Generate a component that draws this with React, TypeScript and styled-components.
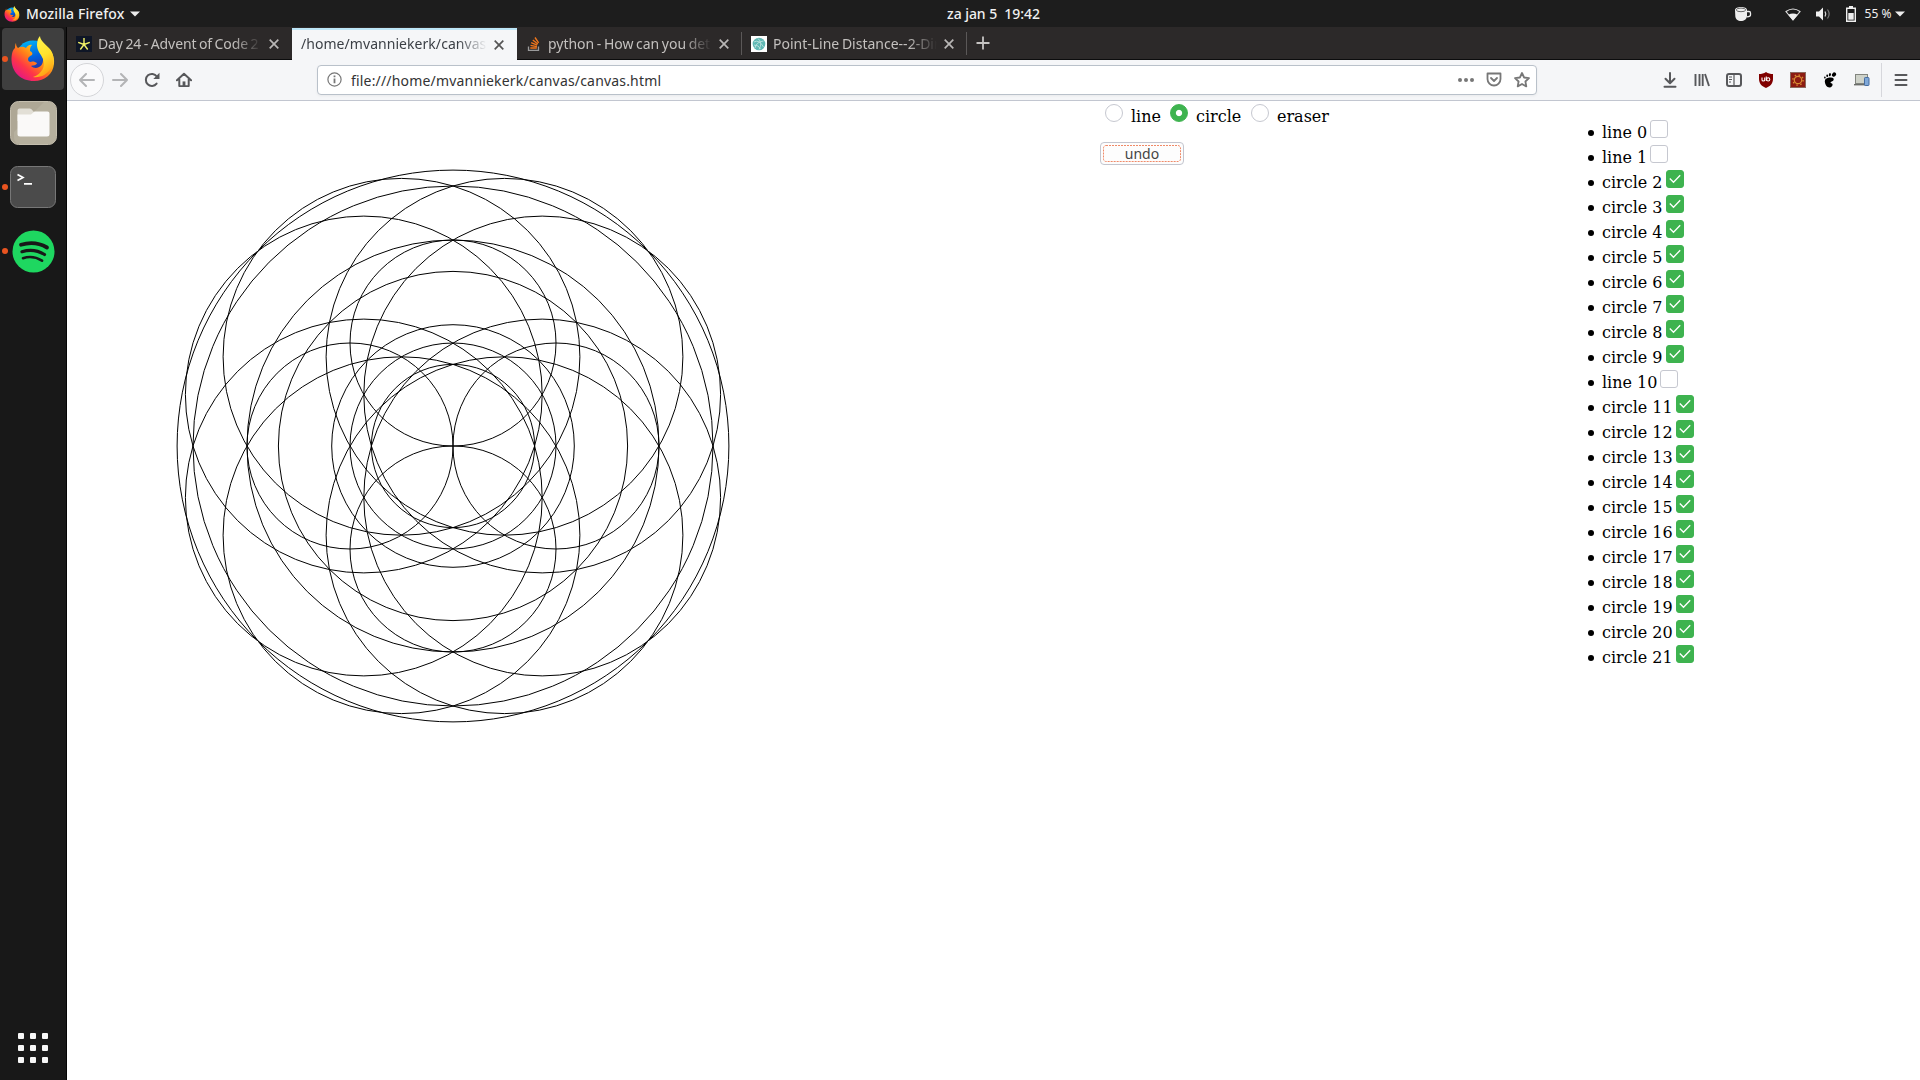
import React from 'react';
import styled, { createGlobalStyle } from 'styled-components';

const Global = createGlobalStyle`
  * { box-sizing: border-box; }
  body { margin: 0; background: #fff; overflow: hidden; }
  svg { display: block; flex: none; }
`;

const UI_FONT = '"Noto Sans", "Open Sans", sans-serif';

const Desktop = styled.div`
  width: 1920px;
  height: 1080px;
  display: flex;
  flex-direction: column;
  font-family: ${UI_FONT};
`;

const TopBar = styled.header`
  height: 27px;
  flex: none;
  display: grid;
  grid-template-columns: 943px 104px 1fr;
  align-items: center;
  padding: 0 12px 1px 4px;
  background: #1d1d1d;
  color: #f0f0f0;
  font-size: 14px;
  line-height: 26px;
  white-space: pre;
`;

const AppMenu = styled.div`
  display: flex;
  align-items: center;
  gap: 6px;
  padding-top: 1px;
`;

const UiText = styled.span<{ $spacing?: number; $size?: number; $weight?: number }>`
  font-size: ${(p) => p.$size ?? 14}px;
  font-weight: ${(p) => p.$weight ?? 400};
  letter-spacing: ${(p) => p.$spacing ?? 0}px;
  white-space: pre;
`;

const Clock = styled.div`
  white-space: pre;
`;

const Indicators = styled.div`
  display: flex;
  align-items: center;
  justify-content: flex-end;
  padding-top: 1px;
`;

const Slot = styled.div<{ $w: number }>`
  width: ${(p) => p.$w}px;
  flex: none;
  display: flex;
  align-items: center;
  justify-content: center;
`;

const Workspace = styled.div`
  flex: 1;
  display: flex;
  min-height: 0;
`;

const Dock = styled.aside`
  width: 67px;
  flex: none;
  display: flex;
  flex-direction: column;
  padding-top: 1px;
  gap: 2px;
  background: #181818;
  border-right: 1px solid #050505;
`;

const DockItem = styled.div<{ $active?: boolean }>`
  height: 62px;
  width: 62px;
  margin-left: 2px;
  display: flex;
  align-items: center;
  border-radius: 4px;
  background: ${(p) => (p.$active ? '#3f3f3f' : 'transparent')};
`;

const DockIcon = styled.div`
  flex: 1;
  display: flex;
  justify-content: center;
  padding-right: 6px;
`;

const Pip = styled.i<{ $on?: boolean }>`
  width: 6px;
  height: 6px;
  border-radius: 50%;
  background: ${(p) => (p.$on ? '#e95420' : 'transparent')};
`;

const AppsGrid = styled.div`
  margin: auto 0 17px 18px;
  display: grid;
  grid-template-columns: repeat(3, 6px);
  grid-auto-rows: 6px;
  gap: 6px;
`;

const AppsDot = styled.i`
  background: #f7f7f7;
  border-radius: 1px;
`;

const Browser = styled.main`
  flex: 1;
  display: flex;
  flex-direction: column;
  min-width: 0;
`;

const TabStrip = styled.nav`
  height: 33px;
  flex: none;
  display: flex;
  background: #2c2929;
  box-shadow: inset 0 -1px 0 #0c0c0d;
`;

const TabBox = styled.div<{ $active?: boolean; $sep?: boolean }>`
  width: 225px;
  display: flex;
  align-items: center;
  padding: 0 13px 0 9px;
  color: ${(p) => (p.$active ? '#3b3f45' : '#c3c0be')};
  margin-top: ${(p) => (p.$active ? 1 : 0)}px;
  border-top: ${(p) => (p.$active ? '2px solid #bde6f7' : 'none')};
  background: ${(p) =>
    p.$active
      ? '#f5f6f8'
      : p.$sep
        ? 'linear-gradient(#5b5858, #5b5858) 100% 5px / 1px 23px no-repeat'
        : 'transparent'};
`;

const TabTitle = styled.div<{ $active?: boolean; $spacing: number }>`
  flex: 1;
  min-width: 0;
  overflow: hidden;
  white-space: pre;
  font-size: 14px;
  line-height: 24px;
  letter-spacing: ${(p) => p.$spacing}px;
  word-spacing: -1px;
  margin-right: 4px;
  margin-top: ${(p) => (p.$active ? -2 : 1)}px;
  mask-image: linear-gradient(to left, transparent 3px, #000 32px);
`;

const Favicon = styled.div`
  width: 16px;
  margin-right: 6px;
`;

const NewTab = styled.div`
  padding: 9px 0 0 9px;
`;

const Toolbar = styled.div`
  height: 41px;
  flex: none;
  display: flex;
  align-items: center;
  padding: 0 3px 1px 3px;
  background: #f5f6f8;
  border-bottom: 1px solid #c2c6d0;
`;

const BackButton = styled.div`
  width: 34px;
  height: 34px;
  border: 1px solid #d4d5d8;
  border-radius: 50%;
  background: #fafafb;
  display: flex;
  align-items: center;
  justify-content: center;
`;

const UrlBar = styled.div`
  width: 1220px;
  height: 30px;
  margin-left: 117px;
  margin-right: 117px;
  display: flex;
  align-items: center;
  padding: 0 0 0 9px;
  border: 1px solid #b9c1ca;
  border-radius: 4px;
  background: #fff;
  box-shadow: 0 1px 3px rgba(0, 0, 0, 0.05);
`;

const Url = styled.div`
  flex: 1;
  margin-left: 9px;
  padding-top: 1px;
  font-size: 14px;
  color: #333;
  letter-spacing: 0.18px;
`;

const Divider = styled.div`
  width: 1px;
  height: 34px;
  background: #d6d7dc;
  margin: 0 3px;
`;

const Page = styled.section`
  flex: 1;
  display: flex;
  background: #fff;
  color: #000;
  font-family: "DejaVu Serif", serif;
  font-size: 16px;
`;

const CanvasArea = styled.div`
  width: 1033px;
`;

const Controls = styled.div`
  width: 462px;
  padding-top: 3px;
`;

const RadioRow = styled.div`
  display: flex;
  height: 24px;
  padding-left: 5px;
`;

const RadioLabel = styled.label<{ $w: number }>`
  display: flex;
  width: ${(p) => p.$w}px;
  gap: 8px;
  line-height: 25px;
`;

const Radio = styled.i<{ $on?: boolean }>`
  width: 18px;
  height: 18px;
  flex: none;
  border-radius: 50%;
  border: 1px solid ${(p) => (p.$on ? '#3eb34f' : '#c6c8d0')};
  background: ${(p) => (p.$on ? 'radial-gradient(circle, #fff 2.7px, #3eb34f 3.6px)' : '#fff')};
`;

const UndoButton = styled.button`
  position: relative;
  width: 84px;
  height: 23px;
  margin: 14px 0 0;
  padding: 0;
  border: 1px solid #c3c5ce;
  border-radius: 4px;
  background: #fdfdfd;
  font-family: ${UI_FONT};
  font-size: 14px;
  line-height: 21px;
  color: #444;
`;

const FocusRing = styled.svg`
  position: absolute;
  left: 2px;
  top: 2px;
`;

const ShapeList = styled.ul`
  margin: 19px 0 0;
  padding: 0;
  list-style: none;
`;

const ShapeRow = styled.li`
  height: 25px;
  display: flex;
  align-items: flex-start;
  line-height: 26px;
  white-space: pre;
`;

const Bullet = styled.i`
  width: 6px;
  height: 6px;
  margin: 10px 8px 0 -7px;
  border-radius: 50%;
  background: #000;
`;

const ShapeName = styled.span`
  margin-right: 3px;
`;

const Check = styled.i<{ $on: boolean }>`
  width: 18px;
  height: 18px;
  border-radius: 3px;
  border: 1px solid ${(p) => (p.$on ? '#3eb34f' : '#c6c8d0')};
  background: ${(p) => (p.$on ? '#3eb34f' : '#fff')};
`;

const ListColumn = styled.div`
  padding-left: 33px;
`;

const FirefoxIcon = ({ size, id }: { size: number; id: string }) => (
  <svg width={size} height={size} viewBox="0 0 44 46">
    <defs>
      <linearGradient id={id + 'a'} x1="0.9" y1="0.1" x2="0.15" y2="0.9">
        <stop offset="0.05" stopColor="#fff44f" />
        <stop offset="0.3" stopColor="#ffb016" />
        <stop offset="0.5" stopColor="#ff7a1b" />
        <stop offset="0.72" stopColor="#ff3647" />
        <stop offset="1" stopColor="#e31587" />
      </linearGradient>
      <linearGradient id={id + 'b'} x1="0.3" y1="0" x2="0.6" y2="1">
        <stop offset="0" stopColor="#00b4f5" />
        <stop offset="0.5" stopColor="#0060df" />
        <stop offset="1" stopColor="#3a1c80" />
      </linearGradient>
      <linearGradient id={id + 'c'} x1="0.3" y1="0" x2="0.6" y2="1">
        <stop offset="0" stopColor="#fff44f" />
        <stop offset="0.5" stopColor="#ffe22c" />
        <stop offset="1" stopColor="#ff9a13" />
      </linearGradient>
    </defs>
    <circle cx="22" cy="22" r="17.5" fill={`url(#${id}b)`} />
    <path
      d="M5 7C5 10 6 11 7 12C10 10 13 11 15 12C16 10 19 8 21 9C19 11 19 13 19 15C21 16 22 17 21 19C19 20 17 21 17 23C17 25 18 26 20 26C22 25 24 26 26 27C25 30 22 29 20 30C24 34 33 32 32 22C31 18 28 15 28 11L36 12C40 14 44 20 43 28C42 38 34 45 23 45C10 45 0 36 0.5 22C1 16 2 14 4 12C4 10 4.200 8 5 7Z"
      fill={`url(#${id}a)`}
    />
    <path
      d="M29 0C29 4 34 8 38 12C43 17 44 25 40 32C36 39 29 42 22 41C31 38 35 30 32 23C30 18 26 15 26 9C26 5 27 2 29 0Z"
      fill={`url(#${id}c)`}
    />
  </svg>
);

const FilesIcon = () => (
  <svg width="47" height="44" viewBox="0 0 47 44">
    <rect x="0.500" y="0.500" width="46" height="43" rx="8" fill="#aea795" stroke="#c4beae" />
    <path d="M34 1L4 31V36C4 40 6 43 10 43H38C43 43 46 40 46 35V9C46 4 43 1 38 1Z" fill="#b9b3a2" opacity="0.7" />
    <path d="M7.500 14V9.500Q7.500 7.500 9.500 7.500H20Q21.500 7.500 23 10L25 12V20H7.500Z" fill="#e2dfd6" />
    <path d="M7.500 13.500H21L24.500 10.500H37.500Q39.500 10.500 39.500 12.500V33Q39.500 35.500 37 35.500H10Q7.500 35.500 7.500 33Z" fill="#faf9f8" />
  </svg>
);

const TerminalIcon = () => (
  <svg width="46" height="42" viewBox="0 0 46 42">
    <rect x="0.500" y="0.500" width="45" height="41" rx="7" fill="#4b4b4b" stroke="#777" />
    <path d="M7.500 8.500L13 11.500L7.500 14.500M14 17.800H22" fill="none" stroke="#fff" strokeWidth="1.700" />
  </svg>
);

const SpotifyIcon = () => (
  <svg width="43" height="43" viewBox="0 0 43 43">
    <circle cx="21.500" cy="21.500" r="21" fill="#1ed760" />
    <g fill="none" stroke="#181818" strokeLinecap="round">
      <path d="M9 14.800Q23 10.500 35 17.500" strokeWidth="3.800" />
      <path d="M10 21.700Q22 18 32.500 24.500" strokeWidth="3.200" />
      <path d="M11 28.200Q21 25 30 30.700" strokeWidth="2.600" />
    </g>
  </svg>
);

const Triangle = () => (
  <svg width="10" height="6" viewBox="0 0 10 6">
    <path d="M0 0.500H10L5 5.500Z" fill="#ededed" />
  </svg>
);

const Close = ({ dark }: { dark?: boolean }) => (
  <svg width="10" height="10" viewBox="0 0 10 10">
    <path d="M0.700 0.700L9.300 9.300M9.300 0.700L0.700 9.300" stroke={dark ? '#555' : '#b9b7b6'} strokeWidth="1.700" />
  </svg>
);

const Stroke = ({ d, color = '#57585b', w = 2 }: { d: string; color?: string; w?: number }) => (
  <svg width="16" height="16" viewBox="0 0 16 16">
    <path d={d} fill="none" stroke={color} strokeWidth={w} strokeLinecap="round" strokeLinejoin="round" />
  </svg>
);

const AdventIcon = () => (
  <svg width="16" height="16" viewBox="0 0 16 16">
    <rect width="16" height="16" fill="#0f1626" />
    <path d="M8 8.500V2M8 8.500L2.200 6.400M8 8.500L13.800 6.400M8 8.500L4.300 13.500M8 8.500L11.700 13.500" stroke="#f2f268" strokeWidth="1.400" />
  </svg>
);

const StackIcon = () => (
  <svg width="16" height="16" viewBox="0 0 16 16">
    <path d="M2.500 10.500V14.300H12.500V10.500" fill="none" stroke="#9a9a9b" strokeWidth="1.300" />
    <path d="M4.300 12H10.800M4.500 9.400L10.900 10.600M5.200 6.700L11.200 9.200M6.800 4L11.800 8M9 1.500L12.600 6.800" stroke="#f0761c" strokeWidth="1.400" />
  </svg>
);

const SphereIcon = () => (
  <svg width="16" height="16" viewBox="0 0 16 16">
    <rect width="16" height="16" fill="#fff" />
    <circle cx="8" cy="8" r="6.300" fill="#5fb8b4" />
    <path d="M3 6Q8 3 12.500 11M4 12Q5 6 12.500 5M7 2.500Q12 7 8 13.500M3 9Q8 9 9.500 13" fill="none" stroke="#b8e0dc" strokeWidth="0.900" />
  </svg>
);

const UblockIcon = () => (
  <svg width="16" height="16" viewBox="0 0 16 16">
    <path d="M8 0C10 1.500 12.500 2 15 2V7C15 11.500 12 14.500 8 16C4 14.500 1 11.500 1 7V2C3.500 2 6 1.500 8 0Z" fill="#800000" />
    <path d="M4 5.500V8Q4 9 5.300 9Q6.700 9 6.700 8V5.500M8.300 4.500V9" fill="none" stroke="#fff" strokeWidth="1.100" />
    <circle cx="10.200" cy="7.400" r="1.600" fill="none" stroke="#fff" strokeWidth="1.100" />
  </svg>
);

const GearIcon = () => (
  <svg width="16" height="16" viewBox="0 0 16 16">
    <rect x="0.500" y="0.500" width="15" height="15" fill="#8c1b12" stroke="#8d6a5e" />
    <circle cx="8" cy="8" r="3.700" fill="none" stroke="#d98c33" strokeWidth="1.200" />
    <circle cx="8" cy="8" r="5.100" fill="none" stroke="#d98c33" strokeWidth="1.400" strokeDasharray="1.500 2.500" />
  </svg>
);

const GnomeIcon = () => (
  <svg width="16" height="16" viewBox="0 0 16 16">
    <path d="M7.500 5.600C11 5 12.300 6.500 11.500 8.200C10.800 9.500 8.500 9.500 8.500 10.500C8.500 11.500 10 11 10.500 12C11 13.500 9.500 15.500 7.500 15.500C5 15.500 3 12.500 2.800 9.500C2.700 7 4.500 6 7.500 5.600Z" />
    <ellipse cx="12" cy="2.600" rx="2.300" ry="1.900" transform="rotate(-50 12 2.600)" />
    <ellipse cx="7.900" cy="2.700" rx="1" ry="1.600" transform="rotate(15 7.900 2.700)" />
    <ellipse cx="5.200" cy="3.800" rx="0.900" ry="1.300" />
    <ellipse cx="2.900" cy="5.500" rx="0.800" ry="1.100" transform="rotate(-15 2.900 5.500)" />
  </svg>
);

const DevicesIcon = () => (
  <svg width="16" height="16" viewBox="0 0 16 16">
    <rect x="1.500" y="2.500" width="12" height="9" fill="#ced2c9" stroke="#82857f" />
    <path d="M0 12.700H14" stroke="#6b6e6a" strokeWidth="1.400" />
    <rect x="10.500" y="5.500" width="4.500" height="8" rx="0.800" fill="#7fa8d8" stroke="#456ca0" />
  </svg>
);

const HomeIcon = () => (
  <svg width="16" height="16" viewBox="0 0 17 16">
    <path d="M1 8.300L8.500 1.300L16 8.300M3.500 7V14.500H13.500V7" fill="none" stroke="#57585b" strokeWidth="2.100" strokeLinecap="round" strokeLinejoin="round" />
    <path d="M7 15V9.500H10V15Z" fill="#57585b" />
  </svg>
);

const ReloadIcon = () => (
  <svg width="16" height="16" viewBox="0 0 16 16">
    <path d="M12.600 11.600A6 6 0 1 1 12.800 4.500" fill="none" stroke="#57585b" strokeWidth="2" strokeLinecap="round" />
    <path d="M15.500 0.800V7H9.300Z" fill="#57585b" />
  </svg>
);

const InfoIcon = () => (
  <svg width="15" height="15" viewBox="0 0 15 15">
    <circle cx="7.500" cy="7.500" r="6.600" fill="none" stroke="#777" strokeWidth="1.200" />
    <path d="M7.500 6.500V11.300M7.500 3.500V5.200" stroke="#777" strokeWidth="1.800" />
  </svg>
);

const CoffeeIcon = () => (
  <svg width="17" height="14" viewBox="0 0 17 14">
    <path d="M0 3C0 1 3 0 6 0C9.500 0 12 1 12 3V9C12 12 9 14 6 14C3 14 0.300 12 0.300 9Z" fill="#eee" />
    <ellipse cx="6" cy="2.900" rx="4.700" ry="1.800" fill="none" stroke="#444" strokeWidth="0.800" />
    <path d="M12 4.500H14Q15.500 4.500 15.500 6V8Q15.500 9.500 12 9.800" fill="none" stroke="#eee" strokeWidth="1.300" />
  </svg>
);

const WifiIcon = () => (
  <svg width="16" height="13" viewBox="0 0 16 13">
    <path d="M8 12L1 3.500Q8 -1.500 15 3.500Z" fill="none" stroke="#ddd" strokeWidth="1.100" />
    <path d="M8 12.500L3.300 6.800Q8 4.400 12.700 6.800Z" fill="#f0f0f0" />
  </svg>
);

const VolumeIcon = () => (
  <svg width="15" height="14" viewBox="0 0 15 14">
    <path d="M0 4.500H3L7 0.500V13.500L3 9.500H0Z" fill="#f0f0f0" />
    <path d="M9 4.500Q10.600 7 9 9.500" fill="none" stroke="#ddd" strokeWidth="1.200" />
    <path d="M11.500 2.500Q14.800 7 11.500 11.500" fill="none" stroke="#777" strokeWidth="1.200" />
  </svg>
);

const BatteryIcon = () => (
  <svg width="10" height="16" viewBox="0 0 10 16">
    <path d="M3 0H7V1.500H10V16H0V1.500H3ZM1.400 3V14.600H8.600V3Z" fill="#f0f0f0" fillRule="evenodd" />
    <rect x="2.300" y="7" width="5.400" height="6.700" fill="#f0f0f0" />
  </svg>
);

const CENTER = { x: 386, y: 345 };
const A = 103;
const HALF = A / 2;
const LONG = A * Math.sin(Math.PI / 3);

const concentric = [275.9, 260, 206, 174.6, 121.3, 103, 81.6].map((r) => [0, 0, r]);
const petals = [[-A, 0, A], [A, 0, A], [0, -A, A], [0, A, A]];
const outer = [1, -1].flatMap((sx) =>
  [1, -1].flatMap((sy) => [
    [sx * LONG, sy * HALF, 2 * LONG],
    [sx * HALF, sy * LONG, 2 * LONG],
  ]),
);
const circles = [...concentric, ...petals, ...outer];

const Drawing = () => (
  <svg width="800" height="800" viewBox="0 0 800 800">
    <g fill="none" stroke="#000" strokeWidth="1">
      {circles.map(([x, y, r], i) => (
        <circle key={i} cx={CENTER.x + x} cy={CENTER.y + y} r={r} />
      ))}
    </g>
  </svg>
);

const shapes = Array.from({ length: 22 }, (_, i) => {
  const isLine = i === 0 || i === 1 || i === 10;
  return { name: `${isLine ? 'line' : 'circle'} ${i}`, on: !isLine };
});

const tabs = [
  { title: 'Day 24 - Advent of Code 2', icon: <AdventIcon />, spacing: -0.1 },
  { title: '/home/mvanniekerk/canvas', active: true, spacing: 0.05 },
  { title: 'python - How can you det', icon: <StackIcon />, sep: true, spacing: -0.02 },
  { title: 'Point-Line Distance--2-Dim', icon: <SphereIcon />, sep: true, spacing: 0 },
];

export default function App() {
  return (
    <Desktop>
      <Global />
      <TopBar>
        <AppMenu>
          <FirefoxIcon size={16} id="s" />
          <UiText $weight={500} $spacing={0.12}>Mozilla Firefox</UiText>
          <Triangle />
        </AppMenu>
        <Clock>
          <UiText $weight={500} $spacing={-0.05}>za jan 5  19:42</UiText>
        </Clock>
        <Indicators>
          <Slot $w={50}><CoffeeIcon /></Slot>
          <Slot $w={9} />
          <Slot $w={32}><WifiIcon /></Slot>
          <Slot $w={28}><VolumeIcon /></Slot>
          <Slot $w={27}><BatteryIcon /></Slot>
          <Slot $w={28}><UiText $size={12}>55 %</UiText></Slot>
          <Slot $w={16}><Triangle /></Slot>
        </Indicators>
      </TopBar>
      <Workspace>
        <Dock>
          <DockItem $active><Pip $on /><DockIcon><FirefoxIcon size={46} id="d" /></DockIcon></DockItem>
          <DockItem><Pip /><DockIcon><FilesIcon /></DockIcon></DockItem>
          <DockItem><Pip $on /><DockIcon><TerminalIcon /></DockIcon></DockItem>
          <DockItem><Pip $on /><DockIcon><SpotifyIcon /></DockIcon></DockItem>
          <AppsGrid>
            {Array.from({ length: 9 }, (_, i) => <AppsDot key={i} />)}
          </AppsGrid>
        </Dock>
        <Browser>
          <TabStrip>
            {tabs.map((t) => (
              <TabBox key={t.title} $active={t.active} $sep={t.sep}>
                {t.icon && <Favicon>{t.icon}</Favicon>}
                <TabTitle $active={t.active} $spacing={t.spacing}>{t.title}</TabTitle>
                <Close dark={t.active} />
              </TabBox>
            ))}
            <NewTab>
              <svg width="14" height="14" viewBox="0 0 14 14">
                <path d="M7 0.500V13.500M0.500 7H13.500" stroke="#c5c3c2" strokeWidth="1.800" />
              </svg>
            </NewTab>
          </TabStrip>
          <Toolbar>
            <BackButton><Stroke d="M15 8H1M7 2L1 8L7 14" color="#b3b4b6" /></BackButton>
            <Slot $w={32}><Stroke d="M1 8H15M9 2L15 8L9 14" color="#b3b4b6" /></Slot>
            <Slot $w={32}><ReloadIcon /></Slot>
            <Slot $w={32}><HomeIcon /></Slot>
            <UrlBar>
              <InfoIcon />
              <Url>file:///home/mvanniekerk/canvas/canvas.html</Url>
              <Slot $w={28}>
                <svg width="16" height="4" viewBox="0 0 16 4">
                  <g fill="#777"><circle cx="2" cy="2" r="2" /><circle cx="8" cy="2" r="2" /><circle cx="14" cy="2" r="2" /></g>
                </svg>
              </Slot>
              <Slot $w={28}><Stroke color="#777" w={1.8} d="M1.500 1.500H14.500V7A6.500 6.500 0 0 1 1.500 7ZM5 6L8 9L11 6" /></Slot>
              <Slot $w={28}><Stroke color="#777" w={1.8} d="M8 1L10.100 5.500L15 6.100L11.400 9.500L12.300 14.400L8 12L3.700 14.400L4.600 9.500L1 6.100L5.900 5.500Z" /></Slot>
            </UrlBar>
            <Slot $w={32}><Stroke d="M8 1V11M3.500 6.800L8 11.200L12.500 6.800M2.500 14.800H13.500" /></Slot>
            <Slot $w={32}>
              <svg width="16" height="16" viewBox="0 0 16 16">
                <path d="M1.500 2V14M5.500 2V14M8.700 2V14M11 2L15 14" stroke="#57585b" strokeWidth="1.900" />
              </svg>
            </Slot>
            <Slot $w={32}>
              <svg width="16" height="16" viewBox="0 0 16 16">
                <rect x="1" y="2" width="14" height="12" rx="2" fill="none" stroke="#57585b" strokeWidth="2" />
                <path d="M8 2V14M3 5H6M3 7.500H6M3 10H5" stroke="#57585b" strokeWidth="1.200" />
              </svg>
            </Slot>
            <Slot $w={32}><UblockIcon /></Slot>
            <Slot $w={32}><GearIcon /></Slot>
            <Slot $w={32}><GnomeIcon /></Slot>
            <Slot $w={32}><DevicesIcon /></Slot>
            <Divider />
            <Slot $w={32}><Stroke d="M2.500 3H13.500M2.500 8H13.500M2.500 13H13.500" /></Slot>
          </Toolbar>
          <Page>
            <CanvasArea><Drawing /></CanvasArea>
            <Controls>
              <RadioRow>
                <RadioLabel $w={65}><Radio />line</RadioLabel>
                <RadioLabel $w={81}><Radio $on />circle</RadioLabel>
                <RadioLabel $w={90}><Radio />eraser</RadioLabel>
              </RadioRow>
              <UndoButton>
                undo
                <FocusRing width="78" height="17" viewBox="0 0 78 17">
                  <rect x="0.500" y="0.500" width="77" height="16" rx="2.500" fill="none" stroke="#f08a68" strokeDasharray="2 1" />
                </FocusRing>
              </UndoButton>
            </Controls>
            <ListColumn>
              <ShapeList>
                {shapes.map((s) => (
                  <ShapeRow key={s.name}>
                    <Bullet />
                    <ShapeName>{s.name}</ShapeName>
                    <Check $on={s.on}>
                      {s.on && (
                        <svg width="16" height="16" viewBox="0 0 16 16">
                          <path d="M2.800 7.500L6.500 11.200L13.200 4.200" fill="none" stroke="#fff" strokeWidth="1.300" />
                        </svg>
                      )}
                    </Check>
                  </ShapeRow>
                ))}
              </ShapeList>
            </ListColumn>
          </Page>
        </Browser>
      </Workspace>
    </Desktop>
  );
}
